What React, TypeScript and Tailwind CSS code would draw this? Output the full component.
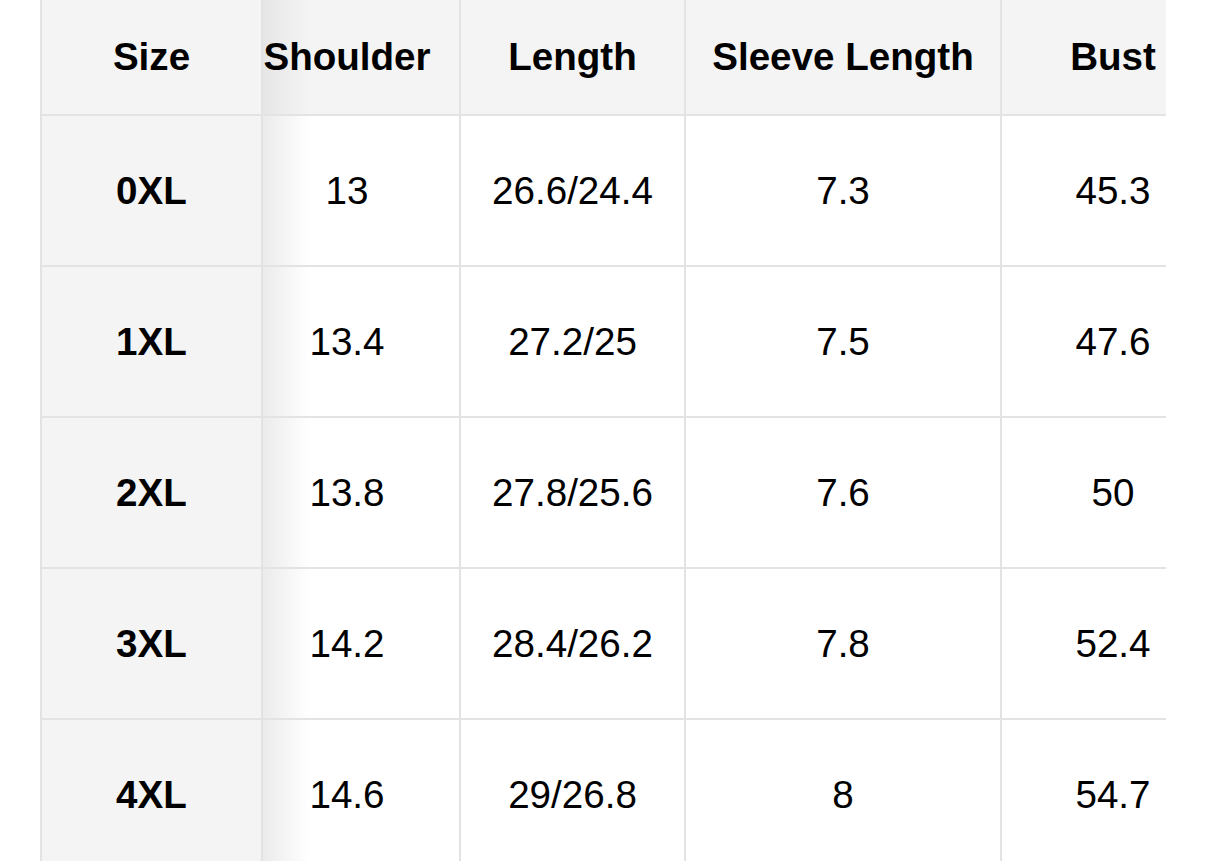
const headers = ["Size", "Shoulder", "Length", "Sleeve Length", "Bust"];

const rows = [
  ["0XL", "13", "26.6/24.4", "7.3", "45.3"],
  ["1XL", "13.4", "27.2/25", "7.5", "47.6"],
  ["2XL", "13.8", "27.8/25.6", "7.6", "50"],
  ["3XL", "14.2", "28.4/26.2", "7.8", "52.4"],
  ["4XL", "14.6", "29/26.8", "8", "54.7"],
];

const cellBase =
  "flex items-center justify-center border-r-2 border-b-2 border-[#e3e3e3] whitespace-nowrap";

function Cell({ col, header, text }: { col: number; header?: boolean; text: string }) {
  let bg = header ? "bg-[#f4f4f4]" : "bg-white";
  if (col === 0) bg = "bg-[#f4f4f4]";
  if (col === 1)
    bg = header
      ? "bg-[linear-gradient(to_right,#e6e6e6,#f4f4f4_46px)] pr-[28px]"
      : "bg-[linear-gradient(to_right,#ebebeb,#ffffff_46px)] pr-[28px]";
  const weight = header || col === 0 ? "font-bold" : "font-normal";
  return <div className={`${cellBase} ${bg} ${weight}`}>{text}</div>;
}

export default function App() {
  return (
    <div className="h-[861px] w-[1206px] overflow-hidden bg-white font-['Liberation_Sans',Arial,sans-serif] text-[38.6px] text-black">
      <div className="ml-[40px] w-[1126px] overflow-hidden border-l-2 border-[#e3e3e3]">
        <div className="grid w-max grid-cols-[221px_198px_225px_316px_224px] grid-rows-[116px_repeat(5,151px)]">
          {headers.map((h, i) => (
            <Cell key={h} col={i} header text={h} />
          ))}
          {rows.map((row) =>
            row.map((v, i) => <Cell key={row[0] + i} col={i} text={v} />)
          )}
        </div>
      </div>
    </div>
  );
}
